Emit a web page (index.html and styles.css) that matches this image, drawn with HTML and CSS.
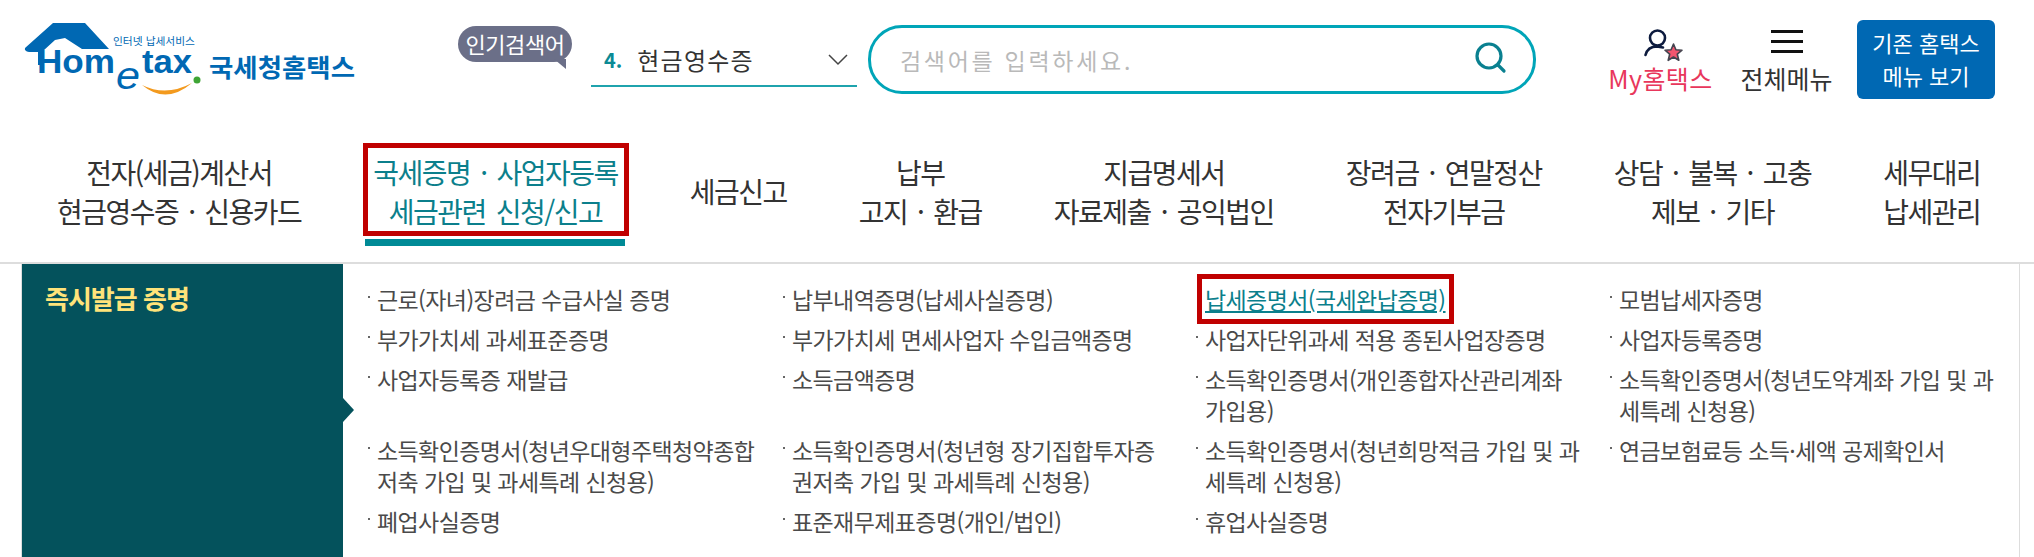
FILE: index.html
```html
<!DOCTYPE html>
<html lang="ko">

<head>
  <meta charset="UTF-8">
  <meta name="viewport" content="width=device-width, initial-scale=1.0">
  <title>국세청 홈택스</title>
  <link rel="stylesheet" href="styles.css">
</head>

<body>
  <header class="top">
    <svg class="logo" width="340" height="90" viewBox="0 0 340 90" role="img" aria-label="Hometax">
      <path d="M5 33 L33 8 L65 8 L89 34 L62 34 L45 23 L35 25 L23 36 L23 50 L18 50 L18 37 L9 37 Q4 36 5 33 Z" fill="#0068b3" />
      <text class="logo-small" x="93" y="30" textLength="82" lengthAdjust="spacingAndGlyphs">인터넷 납세서비스</text>
      <text class="logo-home" x="17" y="58" textLength="78" lengthAdjust="spacingAndGlyphs">Hom</text>
      <text class="logo-e" x="96" y="74" textLength="24" lengthAdjust="spacingAndGlyphs">e</text>
      <text class="logo-home" x="122" y="58" textLength="50" lengthAdjust="spacingAndGlyphs">tax</text>
      <circle cx="177" cy="65" r="3.5" fill="#3fa535" />
      <path d="M122 70 Q146 90 172 68 Q146 82 122 70 Z" fill="#f39a1e" />
      <text class="logo-name" x="189" y="62" textLength="146" lengthAdjust="spacingAndGlyphs">국세청홈택스</text>
    </svg>

    <div class="bubble">인기검색어</div>

    <div class="rank">
      <b>4.</b>
      <span class="rank-text">현금영수증</span>
      <svg class="chevron" width="20" height="12" viewBox="0 0 20 12">
        <path d="M1 1 L10 10 L19 1" fill="none" stroke="#444" stroke-width="1.5" />
      </svg>
    </div>

    <div class="search">
      <span class="search-hint">검색어를 입력하세요.</span>
      <svg class="search-icon" width="32" height="32" viewBox="0 0 32 32">
        <circle cx="14" cy="14" r="12" fill="none" stroke="#0a8090" stroke-width="3.2" />
        <path d="M23 23 L29 29" stroke="#0a8090" stroke-width="3.2" stroke-linecap="round" />
      </svg>
    </div>

    <a class="tool tool-my">
      <svg width="44" height="40" viewBox="0 0 44 40">
        <circle cx="18.5" cy="14" r="7.5" fill="none" stroke="#0d1b3e" stroke-width="2.6" />
        <path d="M6.5 31 C8 25 13 22.5 18 22.5 L24 23.5" fill="none" stroke="#0d1b3e" stroke-width="2.6" stroke-linecap="round" />
        <path d="M34.5 20 L36.9 25.8 L43 26.2 L38.3 30.2 L39.8 36.3 L34.5 33 L29.2 36.3 L30.7 30.2 L26 26.2 L32.1 25.8 Z" fill="#f4566f" stroke="#44444f" stroke-width="1.6" stroke-linejoin="round" />
      </svg>
      <span>My홈택스</span>
    </a>

    <a class="tool tool-all">
      <span class="burger"><i></i><i></i><i></i></span>
      <span>전체메뉴</span>
    </a>

    <a class="old-btn">기존 홈택스<br>메뉴 보기</a>
  </header>

  <nav class="gnb">
    <a>전자(세금)계산서<br>현금영수증 · 신용카드</a>
    <a class="on">국세증명 · 사업자등록<br>세금관련 신청/신고</a>
    <a>세금신고</a>
    <a>납부<br>고지 · 환급</a>
    <a>지급명세서<br>자료제출 · 공익법인</a>
    <a>장려금 · 연말정산<br>전자기부금</a>
    <a>상담 · 불복 · 고충<br>제보 · 기타</a>
    <a>세무대리<br>납세관리</a>
  </nav>

  <section class="panel">
    <h2 class="side">즉시발급 증명</h2>
    <ul class="list">
      <li>근로(자녀)장려금 수급사실 증명</li>
      <li>납부내역증명(납세사실증명)</li>
      <li class="mark"><a>납세증명서(국세완납증명)</a></li>
      <li>모범납세자증명</li>
      <li>부가가치세 과세표준증명</li>
      <li>부가가치세 면세사업자 수입금액증명</li>
      <li>사업자단위과세 적용 종된사업장증명</li>
      <li>사업자등록증명</li>
      <li>사업자등록증 재발급</li>
      <li>소득금액증명</li>
      <li>소득확인증명서(개인종합자산관리계좌 가입용)</li>
      <li>소득확인증명서(청년도약계좌 가입 및 과세특례 신청용)</li>
      <li>소득확인증명서(청년우대형주택청약종합저축 가입 및 과세특례 신청용)</li>
      <li>소득확인증명서(청년형 장기집합투자증권저축 가입 및 과세특례 신청용)</li>
      <li>소득확인증명서(청년희망적금 가입 및 과세특례 신청용)</li>
      <li>연금보험료등 소득·세액 공제확인서</li>
      <li>폐업사실증명</li>
      <li>표준재무제표증명(개인/법인)</li>
      <li>휴업사실증명</li>
    </ul>
  </section>
</body>

</html>
```

FILE: styles.css
```css
* {
  box-sizing: border-box;
}

body {
  margin: 0;
  background-color: #fff;
  color: #333;
  font-family: "Noto Sans CJK KR", "Noto Sans", sans-serif;
  overflow: hidden;
}

/* top bar */
.top {
  display: flex;
  align-items: flex-start;
  height: 130px;
  padding: 20px 0 0 20px;
}

.logo {
  flex: none;
  margin-top: -5px;
}

.logo text {
  font-family: "Liberation Sans", sans-serif;
}

.logo .logo-small {
  font-family: "Noto Sans CJK KR", sans-serif;
  font-size: 10px;
  fill: #0068b3;
}

.logo .logo-home {
  font-size: 34px;
  font-weight: bold;
  fill: #0068b3;
}

.logo .logo-e {
  font-size: 38px;
  font-style: italic;
  fill: #0068b3;
}

.logo .logo-name {
  font-family: "Noto Sans CJK KR", sans-serif;
  font-size: 25px;
  font-weight: bold;
  fill: #0068b3;
}

.bubble {
  position: relative;
  width: 114px;
  height: 36px;
  margin: 6px 0 0 98px;
  background-color: #6b6f88;
  border-radius: 18px;
  color: #fff;
  font-size: 22px;
  line-height: 34px;
  letter-spacing: -0.4px;
  text-align: center;
}

.bubble::after {
  content: "";
  position: absolute;
  right: 6px;
  bottom: -7px;
  border-top: 10px solid #6b6f88;
  border-left: 12px solid transparent;
}

.rank {
  display: flex;
  align-items: center;
  width: 266px;
  height: 67px;
  margin-left: 19px;
  padding: 14px 9px 0 13px;
  border-bottom: 2px solid #1fa3ad;
  font-size: 24px;
  letter-spacing: 1.2px;
}

.rank b {
  color: #0b8a94;
  font-size: 20px;
  letter-spacing: 0;
  margin-right: 15px;
}

.rank-text {
  flex: 1;
}

.search {
  display: flex;
  align-items: center;
  justify-content: space-between;
  width: 668px;
  height: 69px;
  margin: 5px 0 0 11px;
  padding: 0 26px 0 29px;
  border: 3px solid #00a5b8;
  border-radius: 34px;
}

.search-hint {
  color: #b9b9b9;
  font-size: 23px;
  letter-spacing: 2.7px;
}

.search-icon {
  margin-top: -4px;
}

.tool {
  display: flex;
  flex-direction: column;
  align-items: center;
  font-size: 25px;
  line-height: 28px;
  white-space: nowrap;
}

.tool-my {
  width: 105px;
  margin: 4px 0 0 72px;
  color: #e8375c;
  letter-spacing: 0.4px;
}

.tool-all {
  width: 93px;
  margin: 10px 0 0 27px;
}

.burger {
  display: flex;
  flex-direction: column;
  gap: 7px;
  width: 32px;
  margin-bottom: 11px;
}

.burger i {
  height: 3px;
  background-color: #111;
}

.old-btn {
  width: 138px;
  height: 79px;
  margin-left: 24px;
  padding-top: 6px;
  background-color: #0068b3;
  border-radius: 6px;
  color: #fff;
  font-size: 22px;
  line-height: 33px;
  text-align: center;
}

/* main menu */
.gnb {
  display: flex;
  align-items: center;
  gap: 72px;
  height: 134px;
  padding: 0 0 9px 57px;
  border-bottom: 2px solid #ddd;
}

.gnb a {
  position: relative;
  font-size: 28px;
  line-height: 39px;
  letter-spacing: -1.5px;
  word-spacing: 3.5px;
  text-align: center;
  white-space: nowrap;
}

.gnb .on {
  color: #0b7f8c;
}

/* red box around the selected menu */
.gnb .on::before {
  content: "";
  position: absolute;
  top: -10px;
  right: -11px;
  bottom: -5px;
  left: -10px;
  border: 5px solid #c00000;
}

.gnb .on::after {
  content: "";
  position: absolute;
  left: -8px;
  right: -7px;
  bottom: -15px;
  height: 7px;
  background-color: #008a96;
}

/* issue list */
.panel {
  display: flex;
  height: 293px;
  margin: 0 14px 0 21px;
  border-left: 1px solid #ddd;
  border-right: 1px solid #ddd;
}

.side {
  position: relative;
  flex: none;
  width: 321px;
  margin: 0;
  padding: 15px 23px;
  background-color: #04525c;
  color: #ffe37a;
  font-size: 26px;
  font-weight: bold;
  letter-spacing: -1px;
}

.side::after {
  content: "";
  position: absolute;
  top: 134px;
  right: -11px;
  border-left: 11px solid #04525c;
  border-top: 12px solid transparent;
  border-bottom: 12px solid transparent;
}

.list {
  flex: 1;
  display: grid;
  grid-template-columns: 415px 413px 414px 413px;
  align-content: start;
  row-gap: 9px;
  margin: 0;
  padding: 20px 0 0 25px;
  list-style: none;
  color: #4a4a4a;
  font-size: 23px;
  line-height: 31px;
  letter-spacing: -0.6px;
}

.list li {
  position: relative;
  padding: 0 24px 0 9px;
}

.list li::before {
  content: "";
  position: absolute;
  left: 0;
  top: 12px;
  width: 2px;
  height: 2px;
  background-color: #666;
}

.list .mark {
  color: #0b7f8c;
}

.list .mark::before {
  display: none;
}

.list .mark a {
  text-decoration: underline;
  outline: 5px solid #c00000;
  outline-offset: 3px;
}
```
